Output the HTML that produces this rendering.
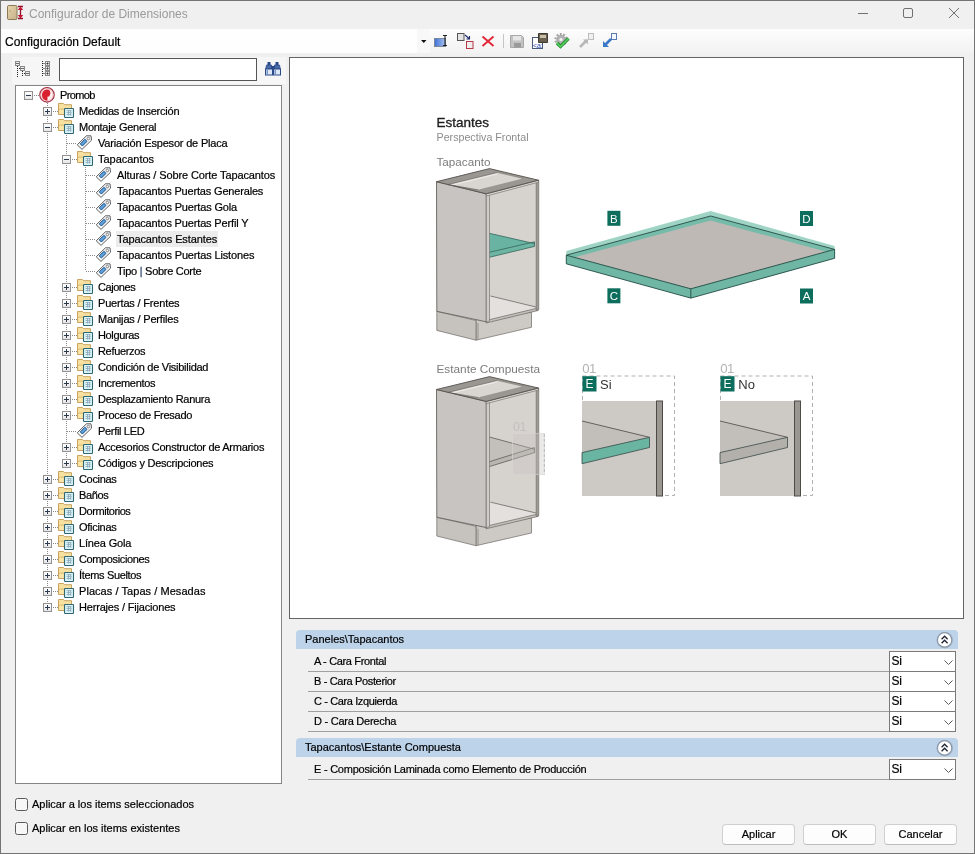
<!DOCTYPE html>
<html><head><meta charset="utf-8">
<style>
*{margin:0;padding:0;box-sizing:border-box}
html,body{width:975px;height:854px;overflow:hidden;background:#f0f0f0;font-family:"Liberation Sans",sans-serif;color:#000}
.a{position:absolute}
#win{position:absolute;left:0;top:0;width:975px;height:854px;border:1px solid #747474;background:#f0f0f0}
.vd{position:absolute;width:1px;background:repeating-linear-gradient(to bottom,#8a8a8a 0 1px,transparent 1px 2px)}
.hd{position:absolute;height:1px;background:repeating-linear-gradient(to right,#8a8a8a 0 1px,transparent 1px 2px)}
.exp{position:absolute;width:9px;height:9px;border:1px solid #919191;background:linear-gradient(#fff,#e6e6e6);}
.exp .mh{position:absolute;left:1px;top:3px;width:5px;height:1px;background:#2b3a4e}
.exp .mv{position:absolute;left:3px;top:1px;width:1px;height:5px;background:#2b3a4e}
.ico{position:absolute;width:17px;height:16px}
.ico svg{display:block}
.tl{position:absolute;font-size:11px;line-height:16px;white-space:nowrap;color:#000;padding:0 1px;margin-left:-1px}
.tl.sel{background:#ececec;}
.hdr{position:absolute;left:296px;width:662px;height:19px;background:#bdd3ea;border-radius:4px 4px 0 0;font-size:11px;line-height:19px;padding-left:9px;color:#000;white-space:nowrap}
.pl{position:absolute;font-size:11px;line-height:20px;white-space:nowrap;letter-spacing:-0.25px;color:#000}
.dd{position:absolute;width:67px;height:21px;border:1px solid #7a7a7a;background:#fff}
.dd span{position:absolute;left:1.6px;top:0px;font-size:12px;line-height:18px;letter-spacing:-0.3px}
.cb{position:absolute;left:15px;width:13px;height:13px;border:1px solid #5a5a5a;border-radius:2.5px;background:#f7f7f7}
.lbl{font-size:11px;line-height:16px;white-space:nowrap}
.btn{position:absolute;top:824px;width:73px;height:21px;border:1px solid #d0d0d0;border-bottom-color:#bdbdbd;border-radius:4px;background:#fdfdfd;font-size:11px;line-height:19px;text-align:center}
.tl,.pl,.hdr,.lbl,.btn,.dd span,.cfg{-webkit-text-stroke:0.2px #000}
</style></head><body>
<div id="root" style="position:absolute;left:0;top:0;width:975px;height:854px;will-change:transform">
<div id="win"></div>
<!-- title bar -->
<div class="a" style="left:1px;top:1px;width:973px;height:28px;background:#f0f0f0"></div>
<svg class="a" style="left:5px;top:3px" width="20" height="20" viewBox="5 3 20 20">
<defs><linearGradient id="dg" x1="0" y1="0" x2="1" y2="1"><stop offset="0" stop-color="#e6d6ae"/><stop offset="1" stop-color="#c6b088"/></linearGradient></defs>
<rect x="7.5" y="5.5" width="9.5" height="14" rx="1.2" fill="url(#dg)" stroke="#8a7a55"/>
<path d="M9.6 10.5l1.2 1" stroke="#9a8a68"/>
<path d="M18 6.5h5M18 18.5h5M20.5 8v9" stroke="#8e1028" stroke-width="1.3"/>
<path d="M17.8 10L20.5 6.6L23.2 10Z M17.8 15L20.5 18.4L23.2 15Z" fill="#c41434"/>
</svg>
<div class="a" style="left:29px;top:6px;font-size:12px;line-height:16px;color:#9a9a9a;white-space:nowrap">Configurador de Dimensiones</div>
<svg class="a" style="left:850px;top:0px" width="124" height="28" viewBox="850 0 124 28">
<path d="M858 13.5h10" stroke="#707070" stroke-width="1"/>
<rect x="903.5" y="8.5" width="9" height="9" rx="1.5" fill="none" stroke="#707070" stroke-width="1"/>
<path d="M949 8L959 18M959 8L949 18" stroke="#707070" stroke-width="1"/>
</svg>
<!-- toolbar -->
<div class="a" style="left:1px;top:29px;width:973px;height:24px;background:linear-gradient(#fdfdfd,#f2f2f2)"></div>
<div class="a" style="left:1px;top:29px;width:416px;height:24px;background:#fefefe"></div>
<div class="a" style="left:417px;top:29px;width:13px;height:24px;background:#f8f8f8"></div>
<div class="a cfg" style="left:5px;top:34px;font-size:12px;line-height:16px;color:#000;white-space:nowrap">Configuración Default</div>
<svg class="a" style="left:415px;top:29px" width="210" height="24" viewBox="415 29 210 24">
<defs>
<linearGradient id="bl" x1="0" y1="0" x2="1" y2="0"><stop offset="0" stop-color="#3f6fd8"/><stop offset="1" stop-color="#a8c4f0"/></linearGradient>
</defs>
<path d="M421 40h5.5l-2.75 3z" fill="#111"/>
<rect x="434.5" y="38.5" width="11" height="8" fill="url(#bl)" stroke="#7a8898"/>
<path d="M443 35.5h4M443 45.5h4M445 35.5v10" stroke="#222" stroke-width="1.1"/>
<rect x="457.5" y="33.5" width="6.5" height="7" fill="#e4e4e4" stroke="#555"/>
<path d="M465 35l4 3.5M469.5 36v3h-3" stroke="#1e2a6a" stroke-width="1.1" fill="none"/>
<rect x="466.5" y="41.5" width="6.5" height="7" fill="#eee" stroke="#b83848"/>
<path d="M482.5 36.5l11 9.5M493.5 36.5l-11 9.5" stroke="#e22a3a" stroke-width="2"/>
<path d="M503.5 34v14" stroke="#c4c4c4"/>
<path d="M510.5 35.5h11l2 2v10h-13z" fill="#c2c2c2" stroke="#a8a8a8"/>
<rect x="513" y="36" width="8" height="4.5" fill="#e6e6e6"/>
<rect x="514" y="43" width="7" height="4.5" fill="#9a9a9a"/>
<rect x="532.5" y="37.5" width="10" height="11" fill="#fff" stroke="#4a5a7a"/>
<path d="M538.5 33.5h9v9h-9z" fill="#6a6050" stroke="#3e3a30"/>
<rect x="540" y="35" width="6" height="3" fill="#c8c0a8"/>
<text x="533" y="47.5" font-family="Liberation Sans" font-size="7" fill="#2040b0">&lt;a:</text>
<circle cx="561" cy="39.5" r="5.6" fill="none" stroke="#a4a4a4" stroke-width="2" stroke-dasharray="1.9 1.6"/>
<circle cx="561" cy="39.5" r="4.2" fill="#b4b4b4" stroke="#8a8a8a" stroke-width="0.6"/>
<circle cx="561" cy="39.5" r="1.6" fill="#f4f4f4"/>
<path d="M557 43l3.5 3.5l8-8" stroke="#1e8a2e" stroke-width="3.2" fill="none"/>
<path d="M557 43l3.5 3.5l8-8" stroke="#58d060" stroke-width="1.6" fill="none"/>
<rect x="588.5" y="33.5" width="5" height="6" fill="#f0f0f0" stroke="#bdbdbd"/>
<path d="M580 47l7-7" stroke="#b8b8b8" stroke-width="2.6"/>
<path d="M583 39.5h5v5z" fill="#b8b8b8"/>
<rect x="611.5" y="33.5" width="5" height="6" fill="#f4f8ff" stroke="#5a7ab0"/>
<path d="M611 39l-7 7" stroke="#3a78c8" stroke-width="2.6"/>
<path d="M603 47v-6l6 6z" fill="#3a78c8"/>
</svg>
<!-- left panel -->
<div class="a" style="left:12px;top:57px;width:274px;height:27px;background:#f6f6f6"></div>
<svg class="a" style="left:12px;top:56px" width="275" height="28" viewBox="12 56 275 28">
<g fill="none" stroke="#8a8a8a">
<rect x="15.5" y="61.5" width="4" height="4" fill="#eee"/>
<rect x="20.5" y="66.5" width="4" height="4" fill="#eee"/>
<rect x="25.5" y="71.5" width="4" height="4" fill="#eee"/>
<rect x="45.5" y="61.5" width="4" height="4" fill="#eee"/>
<rect x="45.5" y="66.5" width="4" height="4" fill="#eee"/>
<rect x="45.5" y="71.5" width="4" height="4" fill="#eee"/>
</g>
<g stroke="#333" stroke-width="1">
<path d="M46.5 63.5h2M46.5 68.5h2M46.5 73.5h2M47.5 62.5v2M47.5 67.5v2M47.5 72.5v2"/>
</g>
<g stroke="#6a6a6a" stroke-width="1">
<path d="M16 63.5h3M21 68.5h3M26 73.5h3"/>
</g>
<path d="M17.5 66v11M22.5 71v6M19 68.5h1M24 73.5h1M42.5 61v16M43.5 63.5h1M43.5 68.5h1M43.5 73.5h1" stroke="#222" stroke-dasharray="1 1"/>
<g>
<rect x="267.5" y="62" width="3" height="3" fill="#2a4a8a"/>
<rect x="275.5" y="62" width="3" height="3" fill="#2a4a8a"/>
<path d="M266.5 65h5l0.8 4h-6.6z" fill="#4a6aaa" stroke="#2a4a8a" stroke-width="0.8"/>
<path d="M274.5 65h5l0.8 4h-6.6z" fill="#4a6aaa" stroke="#2a4a8a" stroke-width="0.8"/>
<rect x="271" y="66" width="4" height="3" fill="#2a4a8a"/>
<rect x="265.5" y="69" width="7" height="6" fill="#dfe8f6" stroke="#2a4a8a" stroke-width="1"/>
<rect x="273.5" y="69" width="7" height="6" fill="#dfe8f6" stroke="#2a4a8a" stroke-width="1"/>
<rect x="266.5" y="70" width="1.5" height="4" fill="#7a96c8"/>
<rect x="274.5" y="70" width="1.5" height="4" fill="#7a96c8"/>
</g>
</svg>
<div class="a" style="left:59px;top:58px;width:198px;height:23px;border:1px solid #555;background:#fff"></div>
<div class="a" style="left:15px;top:85px;width:267px;height:699px;border:1px solid #858585;background:#fff"></div>
<div class="vd" style="left:47px;top:103px;height:504px"></div>
<div class="vd" style="left:66px;top:135px;height:328px"></div>
<div class="vd" style="left:85px;top:167px;height:104px"></div>
<div class="hd" style="left:34px;top:95px;width:5px"></div>
<div class="hd" style="left:53px;top:111px;width:5px"></div>
<div class="hd" style="left:53px;top:127px;width:5px"></div>
<div class="hd" style="left:67px;top:143px;width:10px"></div>
<div class="hd" style="left:72px;top:159px;width:5px"></div>
<div class="hd" style="left:86px;top:175px;width:10px"></div>
<div class="hd" style="left:86px;top:191px;width:10px"></div>
<div class="hd" style="left:86px;top:207px;width:10px"></div>
<div class="hd" style="left:86px;top:223px;width:10px"></div>
<div class="hd" style="left:86px;top:239px;width:10px"></div>
<div class="hd" style="left:86px;top:255px;width:10px"></div>
<div class="hd" style="left:86px;top:271px;width:10px"></div>
<div class="hd" style="left:72px;top:287px;width:5px"></div>
<div class="hd" style="left:72px;top:303px;width:5px"></div>
<div class="hd" style="left:72px;top:319px;width:5px"></div>
<div class="hd" style="left:72px;top:335px;width:5px"></div>
<div class="hd" style="left:72px;top:351px;width:5px"></div>
<div class="hd" style="left:72px;top:367px;width:5px"></div>
<div class="hd" style="left:72px;top:383px;width:5px"></div>
<div class="hd" style="left:72px;top:399px;width:5px"></div>
<div class="hd" style="left:72px;top:415px;width:5px"></div>
<div class="hd" style="left:67px;top:431px;width:10px"></div>
<div class="hd" style="left:72px;top:447px;width:5px"></div>
<div class="hd" style="left:72px;top:463px;width:5px"></div>
<div class="hd" style="left:53px;top:479px;width:5px"></div>
<div class="hd" style="left:53px;top:495px;width:5px"></div>
<div class="hd" style="left:53px;top:511px;width:5px"></div>
<div class="hd" style="left:53px;top:527px;width:5px"></div>
<div class="hd" style="left:53px;top:543px;width:5px"></div>
<div class="hd" style="left:53px;top:559px;width:5px"></div>
<div class="hd" style="left:53px;top:575px;width:5px"></div>
<div class="hd" style="left:53px;top:591px;width:5px"></div>
<div class="hd" style="left:53px;top:607px;width:5px"></div>
<div class="exp" style="left:24px;top:91px"><i class="mh"></i></div>
<div class="ico" style="left:39px;top:87px"><svg width="17" height="17" viewBox="0 0 17 17"><circle cx="8" cy="7.8" r="7.2" fill="#fdeef0" stroke="#a83a4c" stroke-width="1.3"/><circle cx="8" cy="7.8" r="6" fill="none" stroke="#f6c4cc" stroke-width="0.8"/><path d="M3 8.2C3 5 5 2.5 8 2.4C10.2 2.4 11.4 3.6 11 5.1L11.7 6.3L10.9 6.9L11.2 7.7L10.6 8.2C10.8 9.1 10.2 9.7 9.2 9.6L8.5 9.8L8.4 13.6C5.8 13.4 3 11.6 3 8.2Z" fill="#d8202e"/></svg></div>
<div class="tl" style="left:60px;top:87px;letter-spacing:-0.654px">Promob</div>
<div class="exp" style="left:43px;top:107px"><i class="mh"></i><i class="mv"></i></div>
<div class="ico" style="left:58px;top:103px"><svg width="17" height="16" viewBox="0 0 17 16"><path d="M0.5 0.5h5l1 1.2h7v9.8h-13z" fill="#f8e0a0" stroke="#c9a45e"/><path d="M1 6.2h12.5" stroke="#d8b46a" stroke-width="1"/><path d="M1.5 6.8h11.5v4.2h-11.5z" fill="#fae6a8"/><rect x="6.5" y="5.5" width="9" height="9" rx="0.8" fill="#dcf6fa" stroke="#2f6670" stroke-width="1.1"/><path d="M8.5 7.6h5M8.5 9.6h5M8.5 11.6h5M10.5 7.2v5.3M12.6 7.2v5.3" stroke="#8eabbb" stroke-width="0.9"/></svg></div>
<div class="tl" style="left:79px;top:103px;letter-spacing:-0.208px">Medidas de Inserción</div>
<div class="exp" style="left:43px;top:123px"><i class="mh"></i></div>
<div class="ico" style="left:58px;top:119px"><svg width="17" height="16" viewBox="0 0 17 16"><path d="M0.5 0.5h5l1 1.2h7v9.8h-13z" fill="#f8e0a0" stroke="#c9a45e"/><path d="M1 6.2h12.5" stroke="#d8b46a" stroke-width="1"/><path d="M1.5 6.8h11.5v4.2h-11.5z" fill="#fae6a8"/><rect x="6.5" y="5.5" width="9" height="9" rx="0.8" fill="#dcf6fa" stroke="#2f6670" stroke-width="1.1"/><path d="M8.5 7.6h5M8.5 9.6h5M8.5 11.6h5M10.5 7.2v5.3M12.6 7.2v5.3" stroke="#8eabbb" stroke-width="0.9"/></svg></div>
<div class="tl" style="left:79px;top:119px;letter-spacing:-0.275px">Montaje General</div>
<div class="ico" style="left:76px;top:135px"><svg width="17" height="16" viewBox="0 0 17 16"><path d="M1.2 9.8L6 14.4L15.6 5.2L15 0.8L10.4 0.8Z" fill="#f2f4f6" stroke="#626262" stroke-width="1"/><path d="M4.3 8.9L8.9 4.3L11 6.4L6.4 11Z" fill="#5ea2dc" stroke="#1d4f86" stroke-width="1"/><circle cx="12.3" cy="3.6" r="1.3" fill="#fff" stroke="#777" stroke-width="0.9"/></svg></div>
<div class="tl" style="left:98px;top:135px;letter-spacing:-0.186px">Variación Espesor de Placa</div>
<div class="exp" style="left:62px;top:155px"><i class="mh"></i></div>
<div class="ico" style="left:77px;top:151px"><svg width="17" height="16" viewBox="0 0 17 16"><path d="M0.5 0.5h5l1 1.2h7v9.8h-13z" fill="#f8e0a0" stroke="#c9a45e"/><path d="M1 6.2h12.5" stroke="#d8b46a" stroke-width="1"/><path d="M1.5 6.8h11.5v4.2h-11.5z" fill="#fae6a8"/><rect x="6.5" y="5.5" width="9" height="9" rx="0.8" fill="#dcf6fa" stroke="#2f6670" stroke-width="1.1"/><path d="M8.5 7.6h5M8.5 9.6h5M8.5 11.6h5M10.5 7.2v5.3M12.6 7.2v5.3" stroke="#8eabbb" stroke-width="0.9"/></svg></div>
<div class="tl" style="left:98px;top:151px;letter-spacing:-0.017px">Tapacantos</div>
<div class="ico" style="left:95px;top:167px"><svg width="17" height="16" viewBox="0 0 17 16"><path d="M1.2 9.8L6 14.4L15.6 5.2L15 0.8L10.4 0.8Z" fill="#f2f4f6" stroke="#626262" stroke-width="1"/><path d="M4.3 8.9L8.9 4.3L11 6.4L6.4 11Z" fill="#5ea2dc" stroke="#1d4f86" stroke-width="1"/><circle cx="12.3" cy="3.6" r="1.3" fill="#fff" stroke="#777" stroke-width="0.9"/></svg></div>
<div class="tl" style="left:117px;top:167px;letter-spacing:-0.117px">Alturas / Sobre Corte Tapacantos</div>
<div class="ico" style="left:95px;top:183px"><svg width="17" height="16" viewBox="0 0 17 16"><path d="M1.2 9.8L6 14.4L15.6 5.2L15 0.8L10.4 0.8Z" fill="#f2f4f6" stroke="#626262" stroke-width="1"/><path d="M4.3 8.9L8.9 4.3L11 6.4L6.4 11Z" fill="#5ea2dc" stroke="#1d4f86" stroke-width="1"/><circle cx="12.3" cy="3.6" r="1.3" fill="#fff" stroke="#777" stroke-width="0.9"/></svg></div>
<div class="tl" style="left:117px;top:183px;letter-spacing:-0.173px">Tapacantos Puertas Generales</div>
<div class="ico" style="left:95px;top:199px"><svg width="17" height="16" viewBox="0 0 17 16"><path d="M1.2 9.8L6 14.4L15.6 5.2L15 0.8L10.4 0.8Z" fill="#f2f4f6" stroke="#626262" stroke-width="1"/><path d="M4.3 8.9L8.9 4.3L11 6.4L6.4 11Z" fill="#5ea2dc" stroke="#1d4f86" stroke-width="1"/><circle cx="12.3" cy="3.6" r="1.3" fill="#fff" stroke="#777" stroke-width="0.9"/></svg></div>
<div class="tl" style="left:117px;top:199px;letter-spacing:-0.149px">Tapacantos Puertas Gola</div>
<div class="ico" style="left:95px;top:215px"><svg width="17" height="16" viewBox="0 0 17 16"><path d="M1.2 9.8L6 14.4L15.6 5.2L15 0.8L10.4 0.8Z" fill="#f2f4f6" stroke="#626262" stroke-width="1"/><path d="M4.3 8.9L8.9 4.3L11 6.4L6.4 11Z" fill="#5ea2dc" stroke="#1d4f86" stroke-width="1"/><circle cx="12.3" cy="3.6" r="1.3" fill="#fff" stroke="#777" stroke-width="0.9"/></svg></div>
<div class="tl" style="left:117px;top:215px;letter-spacing:-0.154px">Tapacantos Puertas Perfil Y</div>
<div class="ico" style="left:95px;top:231px"><svg width="17" height="16" viewBox="0 0 17 16"><path d="M1.2 9.8L6 14.4L15.6 5.2L15 0.8L10.4 0.8Z" fill="#f2f4f6" stroke="#626262" stroke-width="1"/><path d="M4.3 8.9L8.9 4.3L11 6.4L6.4 11Z" fill="#5ea2dc" stroke="#1d4f86" stroke-width="1"/><circle cx="12.3" cy="3.6" r="1.3" fill="#fff" stroke="#777" stroke-width="0.9"/></svg></div>
<div class="tl sel" style="left:117px;top:231px;letter-spacing:-0.107px">Tapacantos Estantes</div>
<div class="ico" style="left:95px;top:247px"><svg width="17" height="16" viewBox="0 0 17 16"><path d="M1.2 9.8L6 14.4L15.6 5.2L15 0.8L10.4 0.8Z" fill="#f2f4f6" stroke="#626262" stroke-width="1"/><path d="M4.3 8.9L8.9 4.3L11 6.4L6.4 11Z" fill="#5ea2dc" stroke="#1d4f86" stroke-width="1"/><circle cx="12.3" cy="3.6" r="1.3" fill="#fff" stroke="#777" stroke-width="0.9"/></svg></div>
<div class="tl" style="left:117px;top:247px;letter-spacing:-0.147px">Tapacantos Puertas Listones</div>
<div class="ico" style="left:95px;top:263px"><svg width="17" height="16" viewBox="0 0 17 16"><path d="M1.2 9.8L6 14.4L15.6 5.2L15 0.8L10.4 0.8Z" fill="#f2f4f6" stroke="#626262" stroke-width="1"/><path d="M4.3 8.9L8.9 4.3L11 6.4L6.4 11Z" fill="#5ea2dc" stroke="#1d4f86" stroke-width="1"/><circle cx="12.3" cy="3.6" r="1.3" fill="#fff" stroke="#777" stroke-width="0.9"/></svg></div>
<div class="tl" style="left:117px;top:263px;letter-spacing:-0.272px">Tipo <span style="color:#5a6a8a;-webkit-text-stroke:0.5px #5a6a8a">|</span> Sobre Corte</div>
<div class="exp" style="left:62px;top:283px"><i class="mh"></i><i class="mv"></i></div>
<div class="ico" style="left:77px;top:279px"><svg width="17" height="16" viewBox="0 0 17 16"><path d="M0.5 0.5h5l1 1.2h7v9.8h-13z" fill="#f8e0a0" stroke="#c9a45e"/><path d="M1 6.2h12.5" stroke="#d8b46a" stroke-width="1"/><path d="M1.5 6.8h11.5v4.2h-11.5z" fill="#fae6a8"/><rect x="6.5" y="5.5" width="9" height="9" rx="0.8" fill="#dcf6fa" stroke="#2f6670" stroke-width="1.1"/><path d="M8.5 7.6h5M8.5 9.6h5M8.5 11.6h5M10.5 7.2v5.3M12.6 7.2v5.3" stroke="#8eabbb" stroke-width="0.9"/></svg></div>
<div class="tl" style="left:98px;top:279px;letter-spacing:-0.438px">Cajones</div>
<div class="exp" style="left:62px;top:299px"><i class="mh"></i><i class="mv"></i></div>
<div class="ico" style="left:77px;top:295px"><svg width="17" height="16" viewBox="0 0 17 16"><path d="M0.5 0.5h5l1 1.2h7v9.8h-13z" fill="#f8e0a0" stroke="#c9a45e"/><path d="M1 6.2h12.5" stroke="#d8b46a" stroke-width="1"/><path d="M1.5 6.8h11.5v4.2h-11.5z" fill="#fae6a8"/><rect x="6.5" y="5.5" width="9" height="9" rx="0.8" fill="#dcf6fa" stroke="#2f6670" stroke-width="1.1"/><path d="M8.5 7.6h5M8.5 9.6h5M8.5 11.6h5M10.5 7.2v5.3M12.6 7.2v5.3" stroke="#8eabbb" stroke-width="0.9"/></svg></div>
<div class="tl" style="left:98px;top:295px;letter-spacing:-0.175px">Puertas / Frentes</div>
<div class="exp" style="left:62px;top:315px"><i class="mh"></i><i class="mv"></i></div>
<div class="ico" style="left:77px;top:311px"><svg width="17" height="16" viewBox="0 0 17 16"><path d="M0.5 0.5h5l1 1.2h7v9.8h-13z" fill="#f8e0a0" stroke="#c9a45e"/><path d="M1 6.2h12.5" stroke="#d8b46a" stroke-width="1"/><path d="M1.5 6.8h11.5v4.2h-11.5z" fill="#fae6a8"/><rect x="6.5" y="5.5" width="9" height="9" rx="0.8" fill="#dcf6fa" stroke="#2f6670" stroke-width="1.1"/><path d="M8.5 7.6h5M8.5 9.6h5M8.5 11.6h5M10.5 7.2v5.3M12.6 7.2v5.3" stroke="#8eabbb" stroke-width="0.9"/></svg></div>
<div class="tl" style="left:98px;top:311px;letter-spacing:-0.181px">Manijas / Perfiles</div>
<div class="exp" style="left:62px;top:331px"><i class="mh"></i><i class="mv"></i></div>
<div class="ico" style="left:77px;top:327px"><svg width="17" height="16" viewBox="0 0 17 16"><path d="M0.5 0.5h5l1 1.2h7v9.8h-13z" fill="#f8e0a0" stroke="#c9a45e"/><path d="M1 6.2h12.5" stroke="#d8b46a" stroke-width="1"/><path d="M1.5 6.8h11.5v4.2h-11.5z" fill="#fae6a8"/><rect x="6.5" y="5.5" width="9" height="9" rx="0.8" fill="#dcf6fa" stroke="#2f6670" stroke-width="1.1"/><path d="M8.5 7.6h5M8.5 9.6h5M8.5 11.6h5M10.5 7.2v5.3M12.6 7.2v5.3" stroke="#8eabbb" stroke-width="0.9"/></svg></div>
<div class="tl" style="left:98px;top:327px;letter-spacing:-0.354px">Holguras</div>
<div class="exp" style="left:62px;top:347px"><i class="mh"></i><i class="mv"></i></div>
<div class="ico" style="left:77px;top:343px"><svg width="17" height="16" viewBox="0 0 17 16"><path d="M0.5 0.5h5l1 1.2h7v9.8h-13z" fill="#f8e0a0" stroke="#c9a45e"/><path d="M1 6.2h12.5" stroke="#d8b46a" stroke-width="1"/><path d="M1.5 6.8h11.5v4.2h-11.5z" fill="#fae6a8"/><rect x="6.5" y="5.5" width="9" height="9" rx="0.8" fill="#dcf6fa" stroke="#2f6670" stroke-width="1.1"/><path d="M8.5 7.6h5M8.5 9.6h5M8.5 11.6h5M10.5 7.2v5.3M12.6 7.2v5.3" stroke="#8eabbb" stroke-width="0.9"/></svg></div>
<div class="tl" style="left:98px;top:343px;letter-spacing:-0.327px">Refuerzos</div>
<div class="exp" style="left:62px;top:363px"><i class="mh"></i><i class="mv"></i></div>
<div class="ico" style="left:77px;top:359px"><svg width="17" height="16" viewBox="0 0 17 16"><path d="M0.5 0.5h5l1 1.2h7v9.8h-13z" fill="#f8e0a0" stroke="#c9a45e"/><path d="M1 6.2h12.5" stroke="#d8b46a" stroke-width="1"/><path d="M1.5 6.8h11.5v4.2h-11.5z" fill="#fae6a8"/><rect x="6.5" y="5.5" width="9" height="9" rx="0.8" fill="#dcf6fa" stroke="#2f6670" stroke-width="1.1"/><path d="M8.5 7.6h5M8.5 9.6h5M8.5 11.6h5M10.5 7.2v5.3M12.6 7.2v5.3" stroke="#8eabbb" stroke-width="0.9"/></svg></div>
<div class="tl" style="left:98px;top:359px;letter-spacing:-0.267px">Condición de Visibilidad</div>
<div class="exp" style="left:62px;top:379px"><i class="mh"></i><i class="mv"></i></div>
<div class="ico" style="left:77px;top:375px"><svg width="17" height="16" viewBox="0 0 17 16"><path d="M0.5 0.5h5l1 1.2h7v9.8h-13z" fill="#f8e0a0" stroke="#c9a45e"/><path d="M1 6.2h12.5" stroke="#d8b46a" stroke-width="1"/><path d="M1.5 6.8h11.5v4.2h-11.5z" fill="#fae6a8"/><rect x="6.5" y="5.5" width="9" height="9" rx="0.8" fill="#dcf6fa" stroke="#2f6670" stroke-width="1.1"/><path d="M8.5 7.6h5M8.5 9.6h5M8.5 11.6h5M10.5 7.2v5.3M12.6 7.2v5.3" stroke="#8eabbb" stroke-width="0.9"/></svg></div>
<div class="tl" style="left:98px;top:375px;letter-spacing:-0.294px">Incrementos</div>
<div class="exp" style="left:62px;top:395px"><i class="mh"></i><i class="mv"></i></div>
<div class="ico" style="left:77px;top:391px"><svg width="17" height="16" viewBox="0 0 17 16"><path d="M0.5 0.5h5l1 1.2h7v9.8h-13z" fill="#f8e0a0" stroke="#c9a45e"/><path d="M1 6.2h12.5" stroke="#d8b46a" stroke-width="1"/><path d="M1.5 6.8h11.5v4.2h-11.5z" fill="#fae6a8"/><rect x="6.5" y="5.5" width="9" height="9" rx="0.8" fill="#dcf6fa" stroke="#2f6670" stroke-width="1.1"/><path d="M8.5 7.6h5M8.5 9.6h5M8.5 11.6h5M10.5 7.2v5.3M12.6 7.2v5.3" stroke="#8eabbb" stroke-width="0.9"/></svg></div>
<div class="tl" style="left:98px;top:391px;letter-spacing:-0.286px">Desplazamiento Ranura</div>
<div class="exp" style="left:62px;top:411px"><i class="mh"></i><i class="mv"></i></div>
<div class="ico" style="left:77px;top:407px"><svg width="17" height="16" viewBox="0 0 17 16"><path d="M0.5 0.5h5l1 1.2h7v9.8h-13z" fill="#f8e0a0" stroke="#c9a45e"/><path d="M1 6.2h12.5" stroke="#d8b46a" stroke-width="1"/><path d="M1.5 6.8h11.5v4.2h-11.5z" fill="#fae6a8"/><rect x="6.5" y="5.5" width="9" height="9" rx="0.8" fill="#dcf6fa" stroke="#2f6670" stroke-width="1.1"/><path d="M8.5 7.6h5M8.5 9.6h5M8.5 11.6h5M10.5 7.2v5.3M12.6 7.2v5.3" stroke="#8eabbb" stroke-width="0.9"/></svg></div>
<div class="tl" style="left:98px;top:407px;letter-spacing:-0.276px">Proceso de Fresado</div>
<div class="ico" style="left:76px;top:423px"><svg width="17" height="16" viewBox="0 0 17 16"><path d="M1.2 9.8L6 14.4L15.6 5.2L15 0.8L10.4 0.8Z" fill="#f2f4f6" stroke="#626262" stroke-width="1"/><path d="M4.3 8.9L8.9 4.3L11 6.4L6.4 11Z" fill="#5ea2dc" stroke="#1d4f86" stroke-width="1"/><circle cx="12.3" cy="3.6" r="1.3" fill="#fff" stroke="#777" stroke-width="0.9"/></svg></div>
<div class="tl" style="left:98px;top:423px;letter-spacing:-0.323px">Perfil LED</div>
<div class="exp" style="left:62px;top:443px"><i class="mh"></i><i class="mv"></i></div>
<div class="ico" style="left:77px;top:439px"><svg width="17" height="16" viewBox="0 0 17 16"><path d="M0.5 0.5h5l1 1.2h7v9.8h-13z" fill="#f8e0a0" stroke="#c9a45e"/><path d="M1 6.2h12.5" stroke="#d8b46a" stroke-width="1"/><path d="M1.5 6.8h11.5v4.2h-11.5z" fill="#fae6a8"/><rect x="6.5" y="5.5" width="9" height="9" rx="0.8" fill="#dcf6fa" stroke="#2f6670" stroke-width="1.1"/><path d="M8.5 7.6h5M8.5 9.6h5M8.5 11.6h5M10.5 7.2v5.3M12.6 7.2v5.3" stroke="#8eabbb" stroke-width="0.9"/></svg></div>
<div class="tl" style="left:98px;top:439px;letter-spacing:-0.275px">Accesorios Constructor de Armarios</div>
<div class="exp" style="left:62px;top:459px"><i class="mh"></i><i class="mv"></i></div>
<div class="ico" style="left:77px;top:455px"><svg width="17" height="16" viewBox="0 0 17 16"><path d="M0.5 0.5h5l1 1.2h7v9.8h-13z" fill="#f8e0a0" stroke="#c9a45e"/><path d="M1 6.2h12.5" stroke="#d8b46a" stroke-width="1"/><path d="M1.5 6.8h11.5v4.2h-11.5z" fill="#fae6a8"/><rect x="6.5" y="5.5" width="9" height="9" rx="0.8" fill="#dcf6fa" stroke="#2f6670" stroke-width="1.1"/><path d="M8.5 7.6h5M8.5 9.6h5M8.5 11.6h5M10.5 7.2v5.3M12.6 7.2v5.3" stroke="#8eabbb" stroke-width="0.9"/></svg></div>
<div class="tl" style="left:98px;top:455px;letter-spacing:-0.25px">Códigos y Descripciones</div>
<div class="exp" style="left:43px;top:475px"><i class="mh"></i><i class="mv"></i></div>
<div class="ico" style="left:58px;top:471px"><svg width="17" height="16" viewBox="0 0 17 16"><path d="M0.5 0.5h5l1 1.2h7v9.8h-13z" fill="#f8e0a0" stroke="#c9a45e"/><path d="M1 6.2h12.5" stroke="#d8b46a" stroke-width="1"/><path d="M1.5 6.8h11.5v4.2h-11.5z" fill="#fae6a8"/><rect x="6.5" y="5.5" width="9" height="9" rx="0.8" fill="#dcf6fa" stroke="#2f6670" stroke-width="1.1"/><path d="M8.5 7.6h5M8.5 9.6h5M8.5 11.6h5M10.5 7.2v5.3M12.6 7.2v5.3" stroke="#8eabbb" stroke-width="0.9"/></svg></div>
<div class="tl" style="left:79px;top:471px;letter-spacing:-0.322px">Cocinas</div>
<div class="exp" style="left:43px;top:491px"><i class="mh"></i><i class="mv"></i></div>
<div class="ico" style="left:58px;top:487px"><svg width="17" height="16" viewBox="0 0 17 16"><path d="M0.5 0.5h5l1 1.2h7v9.8h-13z" fill="#f8e0a0" stroke="#c9a45e"/><path d="M1 6.2h12.5" stroke="#d8b46a" stroke-width="1"/><path d="M1.5 6.8h11.5v4.2h-11.5z" fill="#fae6a8"/><rect x="6.5" y="5.5" width="9" height="9" rx="0.8" fill="#dcf6fa" stroke="#2f6670" stroke-width="1.1"/><path d="M8.5 7.6h5M8.5 9.6h5M8.5 11.6h5M10.5 7.2v5.3M12.6 7.2v5.3" stroke="#8eabbb" stroke-width="0.9"/></svg></div>
<div class="tl" style="left:79px;top:487px;letter-spacing:-0.359px">Baños</div>
<div class="exp" style="left:43px;top:507px"><i class="mh"></i><i class="mv"></i></div>
<div class="ico" style="left:58px;top:503px"><svg width="17" height="16" viewBox="0 0 17 16"><path d="M0.5 0.5h5l1 1.2h7v9.8h-13z" fill="#f8e0a0" stroke="#c9a45e"/><path d="M1 6.2h12.5" stroke="#d8b46a" stroke-width="1"/><path d="M1.5 6.8h11.5v4.2h-11.5z" fill="#fae6a8"/><rect x="6.5" y="5.5" width="9" height="9" rx="0.8" fill="#dcf6fa" stroke="#2f6670" stroke-width="1.1"/><path d="M8.5 7.6h5M8.5 9.6h5M8.5 11.6h5M10.5 7.2v5.3M12.6 7.2v5.3" stroke="#8eabbb" stroke-width="0.9"/></svg></div>
<div class="tl" style="left:79px;top:503px;letter-spacing:-0.44px">Dormitorios</div>
<div class="exp" style="left:43px;top:523px"><i class="mh"></i><i class="mv"></i></div>
<div class="ico" style="left:58px;top:519px"><svg width="17" height="16" viewBox="0 0 17 16"><path d="M0.5 0.5h5l1 1.2h7v9.8h-13z" fill="#f8e0a0" stroke="#c9a45e"/><path d="M1 6.2h12.5" stroke="#d8b46a" stroke-width="1"/><path d="M1.5 6.8h11.5v4.2h-11.5z" fill="#fae6a8"/><rect x="6.5" y="5.5" width="9" height="9" rx="0.8" fill="#dcf6fa" stroke="#2f6670" stroke-width="1.1"/><path d="M8.5 7.6h5M8.5 9.6h5M8.5 11.6h5M10.5 7.2v5.3M12.6 7.2v5.3" stroke="#8eabbb" stroke-width="0.9"/></svg></div>
<div class="tl" style="left:79px;top:519px;letter-spacing:-0.281px">Oficinas</div>
<div class="exp" style="left:43px;top:539px"><i class="mh"></i><i class="mv"></i></div>
<div class="ico" style="left:58px;top:535px"><svg width="17" height="16" viewBox="0 0 17 16"><path d="M0.5 0.5h5l1 1.2h7v9.8h-13z" fill="#f8e0a0" stroke="#c9a45e"/><path d="M1 6.2h12.5" stroke="#d8b46a" stroke-width="1"/><path d="M1.5 6.8h11.5v4.2h-11.5z" fill="#fae6a8"/><rect x="6.5" y="5.5" width="9" height="9" rx="0.8" fill="#dcf6fa" stroke="#2f6670" stroke-width="1.1"/><path d="M8.5 7.6h5M8.5 9.6h5M8.5 11.6h5M10.5 7.2v5.3M12.6 7.2v5.3" stroke="#8eabbb" stroke-width="0.9"/></svg></div>
<div class="tl" style="left:79px;top:535px;letter-spacing:-0.153px">Línea Gola</div>
<div class="exp" style="left:43px;top:555px"><i class="mh"></i><i class="mv"></i></div>
<div class="ico" style="left:58px;top:551px"><svg width="17" height="16" viewBox="0 0 17 16"><path d="M0.5 0.5h5l1 1.2h7v9.8h-13z" fill="#f8e0a0" stroke="#c9a45e"/><path d="M1 6.2h12.5" stroke="#d8b46a" stroke-width="1"/><path d="M1.5 6.8h11.5v4.2h-11.5z" fill="#fae6a8"/><rect x="6.5" y="5.5" width="9" height="9" rx="0.8" fill="#dcf6fa" stroke="#2f6670" stroke-width="1.1"/><path d="M8.5 7.6h5M8.5 9.6h5M8.5 11.6h5M10.5 7.2v5.3M12.6 7.2v5.3" stroke="#8eabbb" stroke-width="0.9"/></svg></div>
<div class="tl" style="left:79px;top:551px;letter-spacing:-0.378px">Composiciones</div>
<div class="exp" style="left:43px;top:571px"><i class="mh"></i><i class="mv"></i></div>
<div class="ico" style="left:58px;top:567px"><svg width="17" height="16" viewBox="0 0 17 16"><path d="M0.5 0.5h5l1 1.2h7v9.8h-13z" fill="#f8e0a0" stroke="#c9a45e"/><path d="M1 6.2h12.5" stroke="#d8b46a" stroke-width="1"/><path d="M1.5 6.8h11.5v4.2h-11.5z" fill="#fae6a8"/><rect x="6.5" y="5.5" width="9" height="9" rx="0.8" fill="#dcf6fa" stroke="#2f6670" stroke-width="1.1"/><path d="M8.5 7.6h5M8.5 9.6h5M8.5 11.6h5M10.5 7.2v5.3M12.6 7.2v5.3" stroke="#8eabbb" stroke-width="0.9"/></svg></div>
<div class="tl" style="left:79px;top:567px;letter-spacing:-0.342px">Ítems Sueltos</div>
<div class="exp" style="left:43px;top:587px"><i class="mh"></i><i class="mv"></i></div>
<div class="ico" style="left:58px;top:583px"><svg width="17" height="16" viewBox="0 0 17 16"><path d="M0.5 0.5h5l1 1.2h7v9.8h-13z" fill="#f8e0a0" stroke="#c9a45e"/><path d="M1 6.2h12.5" stroke="#d8b46a" stroke-width="1"/><path d="M1.5 6.8h11.5v4.2h-11.5z" fill="#fae6a8"/><rect x="6.5" y="5.5" width="9" height="9" rx="0.8" fill="#dcf6fa" stroke="#2f6670" stroke-width="1.1"/><path d="M8.5 7.6h5M8.5 9.6h5M8.5 11.6h5M10.5 7.2v5.3M12.6 7.2v5.3" stroke="#8eabbb" stroke-width="0.9"/></svg></div>
<div class="tl" style="left:79px;top:583px;letter-spacing:0.056px">Placas / Tapas / Mesadas</div>
<div class="exp" style="left:43px;top:603px"><i class="mh"></i><i class="mv"></i></div>
<div class="ico" style="left:58px;top:599px"><svg width="17" height="16" viewBox="0 0 17 16"><path d="M0.5 0.5h5l1 1.2h7v9.8h-13z" fill="#f8e0a0" stroke="#c9a45e"/><path d="M1 6.2h12.5" stroke="#d8b46a" stroke-width="1"/><path d="M1.5 6.8h11.5v4.2h-11.5z" fill="#fae6a8"/><rect x="6.5" y="5.5" width="9" height="9" rx="0.8" fill="#dcf6fa" stroke="#2f6670" stroke-width="1.1"/><path d="M8.5 7.6h5M8.5 9.6h5M8.5 11.6h5M10.5 7.2v5.3M12.6 7.2v5.3" stroke="#8eabbb" stroke-width="0.9"/></svg></div>
<div class="tl" style="left:79px;top:599px;letter-spacing:-0.184px">Herrajes / Fijaciones</div>
<!-- image panel -->
<div class="a" style="left:289px;top:57px;width:675px;height:562px;border:1px solid #646464;background:#fff"></div>
<!-- illustration -->
<svg class="a" style="left:290px;top:58px" width="673" height="560" viewBox="290 58 673 560">
<text x="436.5" y="126.6" font-family="Liberation Sans" font-size="13.5" fill="#1e1e1e" stroke="#1e1e1e" stroke-width="0.35">Estantes</text>
<text x="436.5" y="140.7" font-family="Liberation Sans" font-size="10.7" fill="#8c8c8c">Perspectiva Frontal</text>
<text x="436.5" y="166.1" font-family="Liberation Sans" font-size="11.7" fill="#7c7c7c">Tapacanto</text>
<text x="436.5" y="372.8" font-family="Liberation Sans" font-size="11.8" fill="#7c7c7c">Estante Compuesta</text>
<polygon points="476.00,318.00 531.50,312.30 531.50,327.30 476.00,340.20" fill="#cdc9c5" stroke="#6e6a66" stroke-width="0.7"/>
<polygon points="436.80,311.30 476.00,320.50 476.00,340.20 436.80,330.40" fill="#c6c2be" stroke="#6e6a66" stroke-width="0.7"/>
<line x1="478.00" y1="323.00" x2="478.00" y2="340.00" stroke="#8a8682" stroke-width="0.8"/>
<polygon points="486.00,194.00 538.00,181.00 538.00,310.00 486.00,322.00" fill="#d6d2ce"/>
<polygon points="490.00,296.00 537.00,307.30 537.00,310.00 487.00,322.00" fill="#e3e0dd"/>
<line x1="490.50" y1="296.00" x2="536.00" y2="307.00" stroke="#6e6a66" stroke-width="0.8"/>
<polygon points="488.00,233.00 534.50,243.60 488.00,252.60" fill="#68b3a1"/>
<polygon points="488.00,252.60 534.50,241.80 534.50,246.40 488.00,257.60" fill="#6db5a3" stroke="#35665c" stroke-width="0.8"/>
<line x1="488.00" y1="233.00" x2="534.50" y2="243.60" stroke="#35665c" stroke-width="0.8"/>
<polygon points="486.00,320.50 538.00,308.00 538.00,310.50 486.00,323.00" fill="#c4c0bc" stroke="#6a6662" stroke-width="0.7"/>
<polygon points="536.20,181.50 538.80,180.30 538.80,309.80 536.20,310.50" fill="#9e9a96" stroke="#6a6662" stroke-width="0.6"/>
<polygon points="436.50,181.70 486.30,193.80 486.30,321.80 436.80,311.30" fill="#c8c4c1" stroke="#66625e" stroke-width="0.9"/>
<polygon points="486.30,193.80 489.50,193.00 489.50,321.00 486.30,321.80" fill="#d0ccc9" stroke="#7a7672" stroke-width="0.7"/>
<polygon points="436.50,181.70 489.50,168.60 538.50,180.20 486.30,193.80" fill="#9a9692"/>
<polygon points="486.30,193.80 538.50,180.20 538.50,182.20 486.30,196.00" fill="#dcd9d6" stroke="#6a6662" stroke-width="0.6"/>
<polygon points="448.00,184.60 497.50,172.40 523.00,178.40 478.00,189.80" fill="#d9d5d1"/>
<line x1="448.50" y1="184.40" x2="497.50" y2="172.40" stroke="#6e6a66" stroke-width="0.7"/>
<line x1="450.00" y1="185.60" x2="497.00" y2="174.00" stroke="#f0eeec" stroke-width="0.9"/>
<line x1="497.50" y1="172.40" x2="523.00" y2="178.40" stroke="#7a7672" stroke-width="0.6"/>
<line x1="448.00" y1="184.60" x2="478.00" y2="189.80" stroke="#6a6662" stroke-width="0.7"/>
<polygon points="436.50,181.70 489.50,168.60 538.50,180.20 486.30,193.80" fill="none" stroke="#55514d" stroke-width="0.9"/>
<polygon points="476.00,523.82 531.50,518.21 531.50,532.99 476.00,545.70" fill="#cdc9c5" stroke="#6e6a66" stroke-width="0.7"/>
<polygon points="436.80,517.22 476.00,526.29 476.00,545.70 436.80,536.04" fill="#c6c2be" stroke="#6e6a66" stroke-width="0.7"/>
<line x1="478.00" y1="528.75" x2="478.00" y2="545.50" stroke="#8a8682" stroke-width="0.8"/>
<polygon points="486.00,401.65 538.00,388.84 538.00,515.94 486.00,527.76" fill="#d6d2ce"/>
<polygon points="490.00,502.15 537.00,513.28 537.00,515.94 487.00,527.76" fill="#e3e0dd"/>
<line x1="490.50" y1="502.15" x2="536.00" y2="512.99" stroke="#6e6a66" stroke-width="0.8"/>
<polygon points="488.00,436.60 534.30,449.20 488.00,462.20" fill="#c3bfbb"/>
<polygon points="488.00,462.20 534.30,447.60 534.60,452.60 488.00,467.00" fill="#b9b5b1" stroke="#5e5a56" stroke-width="0.8"/>
<line x1="488.00" y1="436.60" x2="534.30" y2="449.20" stroke="#5e5a56" stroke-width="0.8"/>
<polygon points="486.00,526.29 538.00,513.97 538.00,516.43 486.00,528.75" fill="#c4c0bc" stroke="#6a6662" stroke-width="0.7"/>
<polygon points="536.20,389.33 538.80,388.15 538.80,515.74 536.20,516.43" fill="#9e9a96" stroke="#6a6662" stroke-width="0.6"/>
<polygon points="436.50,389.53 486.30,401.45 486.30,527.57 436.80,517.22" fill="#c8c4c1" stroke="#66625e" stroke-width="0.9"/>
<polygon points="486.30,401.45 489.50,400.66 489.50,526.78 486.30,527.57" fill="#d0ccc9" stroke="#7a7672" stroke-width="0.7"/>
<polygon points="436.50,389.53 489.50,376.62 538.50,388.05 486.30,401.45" fill="#9a9692"/>
<polygon points="486.30,401.45 538.50,388.05 538.50,390.02 486.30,403.62" fill="#dcd9d6" stroke="#6a6662" stroke-width="0.6"/>
<polygon points="448.00,392.39 497.50,380.36 523.00,386.28 478.00,397.51" fill="#d9d5d1"/>
<line x1="448.50" y1="392.19" x2="497.50" y2="380.36" stroke="#6e6a66" stroke-width="0.7"/>
<line x1="450.00" y1="393.37" x2="497.00" y2="381.94" stroke="#f0eeec" stroke-width="0.9"/>
<line x1="497.50" y1="380.36" x2="523.00" y2="386.28" stroke="#7a7672" stroke-width="0.6"/>
<line x1="448.00" y1="392.39" x2="478.00" y2="397.51" stroke="#6a6662" stroke-width="0.7"/>
<polygon points="436.50,389.53 489.50,376.62 538.50,388.05 486.30,401.45" fill="none" stroke="#55514d" stroke-width="0.9"/>
<text x="513" y="430.7" font-family="Liberation Sans" font-size="12.5" fill="#c0c0c0" letter-spacing="-0.5">01</text>
<rect x="512.5" y="433.5" width="32" height="41" fill="#c8c4c0" fill-opacity="0.35" stroke="#d8d6d4" stroke-width="0.6"/>
<line x1="544.3" y1="434" x2="544.3" y2="474.5" stroke="#b4b4b4" stroke-width="0.9" stroke-dasharray="3 2"/>
<polygon points="566.30,251.00 710.60,211.00 834.60,245.90 834.60,249.40 710.60,216.00 566.30,255.20" fill="#9fd4c5"/>
<polygon points="566.30,255.20 690.80,288.80 690.80,298.10 566.30,263.80" fill="#6fb6a4"/>
<polygon points="690.80,288.80 834.60,249.40 834.60,258.30 690.80,298.10" fill="#6fb6a4"/>
<polygon points="566.30,255.20 710.60,216.00 834.60,249.40 690.80,288.80" fill="#76bba9"/>
<polygon points="574.60,257.30 710.60,220.50 826.30,251.70 690.80,288.80" fill="#bfb9b5"/>
<polyline points="566.30,263.80 566.30,255.20 710.60,216.00 834.60,249.40 834.60,258.30 690.80,298.10 566.30,263.80" fill="none" stroke="#1e4a42" stroke-width="0.9"/>
<polyline points="566.30,255.20 690.80,288.80 834.60,249.40" fill="none" stroke="#1e4a42" stroke-width="0.9"/>
<line x1="690.8" y1="288.8" x2="690.8" y2="298.1" stroke="#1e4a42" stroke-width="0.9"/>
<rect x="607.4" y="210.8" width="13" height="15" fill="#0d6e5d"/><text x="613.9" y="222.60000000000002" font-family="Liberation Sans" font-size="11.5" fill="#fff" text-anchor="middle">B</text>
<rect x="800" y="211" width="13" height="15" fill="#0d6e5d"/><text x="806.5" y="222.8" font-family="Liberation Sans" font-size="11.5" fill="#fff" text-anchor="middle">D</text>
<rect x="607.4" y="288.3" width="13" height="15" fill="#0d6e5d"/><text x="613.9" y="300.1" font-family="Liberation Sans" font-size="11.5" fill="#fff" text-anchor="middle">C</text>
<rect x="800" y="288.5" width="13" height="15" fill="#0d6e5d"/><text x="806.5" y="300.3" font-family="Liberation Sans" font-size="11.5" fill="#fff" text-anchor="middle">A</text>
<text x="582.3" y="373.3" font-family="Liberation Sans" font-size="13.2" fill="#b4b4b4" letter-spacing="-0.6">01</text>
<rect x="582.5" y="376" width="92" height="119.5" fill="none" stroke="#a8a8a8" stroke-width="0.9" stroke-dasharray="4 3"/>
<rect x="582" y="401" width="81" height="95" fill="#cdc9c5"/>
<rect x="656.5" y="401" width="6" height="95" fill="#9a9692" stroke="#4e4a46" stroke-width="1"/>
<polygon points="582.00,421.00 649.50,437.30 582.00,452.60" fill="#c2beba"/>
<line x1="582" y1="421" x2="649.5" y2="437.3" stroke="#4a4642" stroke-width="0.8"/>
<polygon points="582.00,452.60 649.50,437.30 649.50,447.50 582.00,463.70" fill="#6ab4a2" stroke="#3a4a46" stroke-width="0.8"/>
<rect x="582.5" y="376.2" width="14" height="15.3" fill="#0d6e5d"/><text x="589.5" y="388.3" font-family="Liberation Sans" font-size="12" fill="#fff" text-anchor="middle">E</text>
<text x="720.3" y="373.3" font-family="Liberation Sans" font-size="13.2" fill="#b4b4b4" letter-spacing="-0.6">01</text>
<rect x="720.5" y="376" width="92" height="119.5" fill="none" stroke="#a8a8a8" stroke-width="0.9" stroke-dasharray="4 3"/>
<rect x="720" y="401" width="81" height="95" fill="#cdc9c5"/>
<rect x="794.5" y="401" width="6" height="95" fill="#9a9692" stroke="#4e4a46" stroke-width="1"/>
<polygon points="720.00,421.00 787.50,437.30 720.00,452.60" fill="#c2beba"/>
<line x1="720" y1="421" x2="787.5" y2="437.3" stroke="#4a4642" stroke-width="0.8"/>
<polygon points="720.00,452.60 787.50,437.30 787.50,447.50 720.00,463.70" fill="#b3afab" stroke="#3a4a46" stroke-width="0.8"/>
<rect x="720.5" y="376.2" width="14" height="15.3" fill="#0d6e5d"/><text x="727.5" y="388.3" font-family="Liberation Sans" font-size="12" fill="#fff" text-anchor="middle">E</text>
<text x="600" y="389" font-family="Liberation Sans" font-size="13" fill="#333">Si</text>
<text x="738.3" y="389" font-family="Liberation Sans" font-size="13" fill="#333">No</text>
</svg>

<div class="hdr" style="top:630px">Paneles\Tapacantos</div>
<svg class="a" style="left:935px;top:629.5px" width="20" height="20" viewBox="0 0 20 20">
<circle cx="9.8" cy="10.2" r="8.3" fill="#8a96a6" opacity="0.45"/>
<circle cx="9.6" cy="9.9" r="7.2" fill="#fff" stroke="#8c98a8" stroke-width="1.2"/>
<path d="M6.6 9.3l3-3.1l3 3.1M6.6 13.3l3-3.1l3 3.1" fill="none" stroke="#1e2430" stroke-width="1.3"/>
</svg>
<div class="pl" style="left:314px;top:651px;letter-spacing:-0.34px">A - Cara Frontal</div>
<div class="a" style="left:308px;top:671px;width:581px;height:1px;background:#a0a0a0"></div>
<div class="dd" style="left:889px;top:651px"><span>Si</span><svg class="a" style="left:54px;top:8px" width="10" height="6" viewBox="0 0 10 6"><path d="M0.5 0.5L4.5 4.5L8.5 0.5" fill="none" stroke="#5a5a5a" stroke-width="1"/></svg></div>
<div class="pl" style="left:314px;top:671px;letter-spacing:-0.34px">B - Cara Posterior</div>
<div class="a" style="left:308px;top:691px;width:581px;height:1px;background:#a0a0a0"></div>
<div class="dd" style="left:889px;top:671px"><span>Si</span><svg class="a" style="left:54px;top:8px" width="10" height="6" viewBox="0 0 10 6"><path d="M0.5 0.5L4.5 4.5L8.5 0.5" fill="none" stroke="#5a5a5a" stroke-width="1"/></svg></div>
<div class="pl" style="left:314px;top:691px;letter-spacing:-0.38px">C - Cara Izquierda</div>
<div class="a" style="left:308px;top:711px;width:581px;height:1px;background:#a0a0a0"></div>
<div class="dd" style="left:889px;top:691px"><span>Si</span><svg class="a" style="left:54px;top:8px" width="10" height="6" viewBox="0 0 10 6"><path d="M0.5 0.5L4.5 4.5L8.5 0.5" fill="none" stroke="#5a5a5a" stroke-width="1"/></svg></div>
<div class="pl" style="left:314px;top:711px;letter-spacing:-0.25px">D - Cara Derecha</div>
<div class="a" style="left:308px;top:731px;width:581px;height:1px;background:#a0a0a0"></div>
<div class="dd" style="left:889px;top:711px"><span>Si</span><svg class="a" style="left:54px;top:8px" width="10" height="6" viewBox="0 0 10 6"><path d="M0.5 0.5L4.5 4.5L8.5 0.5" fill="none" stroke="#5a5a5a" stroke-width="1"/></svg></div>
<div class="hdr" style="top:738px">Tapacantos\Estante Compuesta</div>
<svg class="a" style="left:935px;top:737.5px" width="20" height="20" viewBox="0 0 20 20">
<circle cx="9.8" cy="10.2" r="8.3" fill="#8a96a6" opacity="0.45"/>
<circle cx="9.6" cy="9.9" r="7.2" fill="#fff" stroke="#8c98a8" stroke-width="1.2"/>
<path d="M6.6 9.3l3-3.1l3 3.1M6.6 13.3l3-3.1l3 3.1" fill="none" stroke="#1e2430" stroke-width="1.3"/>
</svg>
<div class="pl" style="left:314px;top:759px;letter-spacing:-0.24px">E - Composición Laminada como Elemento de Producción</div>
<div class="a" style="left:308px;top:779px;width:581px;height:1px;background:#a0a0a0"></div>
<div class="dd" style="left:889px;top:759px"><span>Si</span><svg class="a" style="left:54px;top:8px" width="10" height="6" viewBox="0 0 10 6"><path d="M0.5 0.5L4.5 4.5L8.5 0.5" fill="none" stroke="#5a5a5a" stroke-width="1"/></svg></div>


<div class="cb" style="top:798px"></div><div class="a lbl" style="left:32px;top:796px">Aplicar a los items seleccionados</div>
<div class="cb" style="top:822px"></div><div class="a lbl" style="left:32px;top:820px">Aplicar en los items existentes</div>
<div class="btn" style="left:722px">Aplicar</div>
<div class="btn" style="left:803px">OK</div>
<div class="btn" style="left:884px">Cancelar</div>

</div>
</body></html>
